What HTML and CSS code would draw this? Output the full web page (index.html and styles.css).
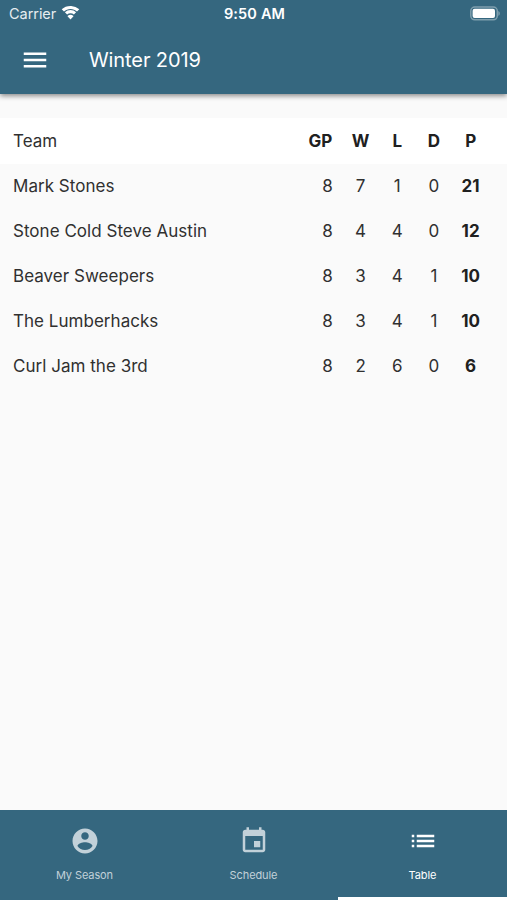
FILE: index.html
```html
<!DOCTYPE html>
<html lang="en">
<head>
<meta charset="utf-8">
<title>Winter 2019</title>
<link rel="stylesheet" href="styles.css">
</head>
<body>
<div class="app">
  <header class="top">
    <div class="status">
      <div class="carrier"><span>Carrier</span>
        <svg width="19" height="14" viewBox="0 0 19 14" fill="#fff"><path d="M9.500 3c2.500 0 4.700 1 6.500 2.600l2.300-2.300A12.600 12.600 0 0 0 9.500 0C6.100 0 3 1.200.7 3.300L3 5.600C4.800 4 7 3 9.500 3z"/><path d="M9.500 7.300c1.300 0 2.400.4 3.400 1.200l2.200-2.200a8.200 8.200 0 0 0-11.200 0l2.200 2.200c1-.8 2.100-1.200 3.400-1.200z"/><path d="M9.500 8.800c-1 0-1.900.4-2.600 1L6.500 10.300l3 3.200 3-3.200-.4-.5c-.7-.6-1.600-1-2.600-1z"/></svg>
      </div>
      <div class="time">9:50 AM</div>
      <svg class="battery" width="30" height="15" viewBox="0 0 30 15"><rect x=".8" y="1" width="26.500" height="12.800" rx="4" fill="none" stroke="#7f9fae" stroke-width="1.500"/><rect x="2.600" y="2.800" width="22.400" height="9.200" rx="2" fill="#fff"/><path d="M28.300 5v4.800c1-.4 1.500-1.300 1.500-2.400s-.5-2-1.500-2.400z" fill="#7f9fae"/></svg>
    </div>
    <div class="bar">
      <svg width="30" height="30" viewBox="0 0 24 24" fill="#fff"><path d="M3 18h18v-2H3v2zm0-5h18v-2H3v2zm0-7v2h18V6H3z"/></svg>
      <h1>Winter 2019</h1>
    </div>
  </header>
  <main>
    <table>
      <thead><tr><th class="team">Team</th><th class="gp">GP</th><th>W</th><th>L</th><th>D</th><th>P</th><th class="end"></th></tr></thead>
      <tbody>
        <tr><td class="team">Mark Stones</td><td class="gp">8</td><td>7</td><td>1</td><td>0</td><td class="pts">21</td><td></td></tr>
        <tr><td class="team">Stone Cold Steve Austin</td><td class="gp">8</td><td>4</td><td>4</td><td>0</td><td class="pts">12</td><td></td></tr>
        <tr><td class="team">Beaver Sweepers</td><td class="gp">8</td><td>3</td><td>4</td><td>1</td><td class="pts">10</td><td></td></tr>
        <tr><td class="team">The Lumberhacks</td><td class="gp">8</td><td>3</td><td>4</td><td>1</td><td class="pts">10</td><td></td></tr>
        <tr><td class="team">Curl Jam the 3rd</td><td class="gp">8</td><td>2</td><td>6</td><td>0</td><td class="pts">6</td><td></td></tr>
      </tbody>
    </table>
  </main>
  <nav>
    <a class="tab"><svg viewBox="0 0 24 24"><path d="M12 2C6.480 2 2 6.480 2 12s4.480 10 10 10 10-4.480 10-10S17.520 2 12 2zm0 3c1.660 0 3 1.340 3 3s-1.340 3-3 3-3-1.340-3-3 1.340-3 3-3zm0 14.200c-2.500 0-4.710-1.280-6-3.220.03-1.990 4-3.080 6-3.080 1.990 0 5.970 1.090 6 3.080-1.290 1.940-3.500 3.220-6 3.220z"/></svg><span>My Season</span></a>
    <a class="tab"><svg viewBox="0 0 24 24"><path d="M17 12h-5v5h5v-5zM16 1v2H8V1H6v2H5c-1.110 0-1.990.9-1.990 2L3 19c0 1.100.89 2 2 2h14c1.100 0 2-.9 2-2V5c0-1.100-.9-2-2-2h-1V1h-2zm3 18H5V8h14v11z"/></svg><span>Schedule</span></a>
    <a class="tab active"><svg viewBox="0 0 24 24"><path d="M3 13h2v-2H3v2zm0 4h2v-2H3v2zm0-8h2V7H3v2zm4 4h14v-2H7v2zm0 4h14v-2H7v2zM7 7v2h14V7H7z"/></svg><span>Table</span></a>
  </nav>
</div>
</body>
</html>
```
FILE: styles.css
```css
* { box-sizing: border-box; }
body { margin: 0; font-family: Inter, sans-serif; background: #fafafa; color: #303030; }
.app { height: 900px; display: flex; flex-direction: column; }
.top { height: 94px; background: #35677f; color: #fff; box-shadow: 0 2px 5px rgba(0,0,0,.45); }
.status { height: 27px; display: grid; grid-template-columns: 1fr auto 1fr; align-items: center; padding: 0 7px 0 9px; }
.carrier { display: flex; align-items: center; gap: 5px; font-size: 14.5px; letter-spacing: -.05px; color: #e6edf0; }
.carrier svg { margin-top: -1px; }
.time { font-size: 14.5px; font-weight: 600; letter-spacing: .15px; }
.battery { justify-self: end; margin-top: -1px; }
.bar { height: 66px; display: flex; align-items: center; padding-left: 20px; gap: 39px; }
h1 { margin: 0; font-size: 20px; font-weight: 400; letter-spacing: -.1px; }
main { flex: 1; padding-top: 24px; }
table { width: 100%; table-layout: fixed; border-collapse: collapse; font-size: 17px; letter-spacing: .03px; }
tr { height: 45px; }
thead tr { height: 46px; }
thead { background: #fff; }
th, td { padding: 0; width: 36.7px; text-align: center; }
td { padding-bottom: 1px; }
th { color: #202020; }
.team { width: auto; text-align: left; padding-left: 13px; font-weight: 400; color: #303030; }
.gp { width: 46px; text-align: right; padding-right: 10px; }
td.gp { padding-right: 9.5px; }
.end { width: 18px; }
.pts { font-weight: 700; color: #202020; }
nav { height: 90px; background: #35677f; display: flex; }
.tab { flex: 1; display: flex; flex-direction: column; align-items: center; padding-top: 16px; gap: 12px; color: #c2d1d9; font-size: 11px; letter-spacing: -.1px; line-height: 14px; border-bottom: 3px solid transparent; }
.tab svg { width: 30px; height: 30px; fill: currentColor; }
.active { color: #fff; border-bottom-color: #fff; }
```
